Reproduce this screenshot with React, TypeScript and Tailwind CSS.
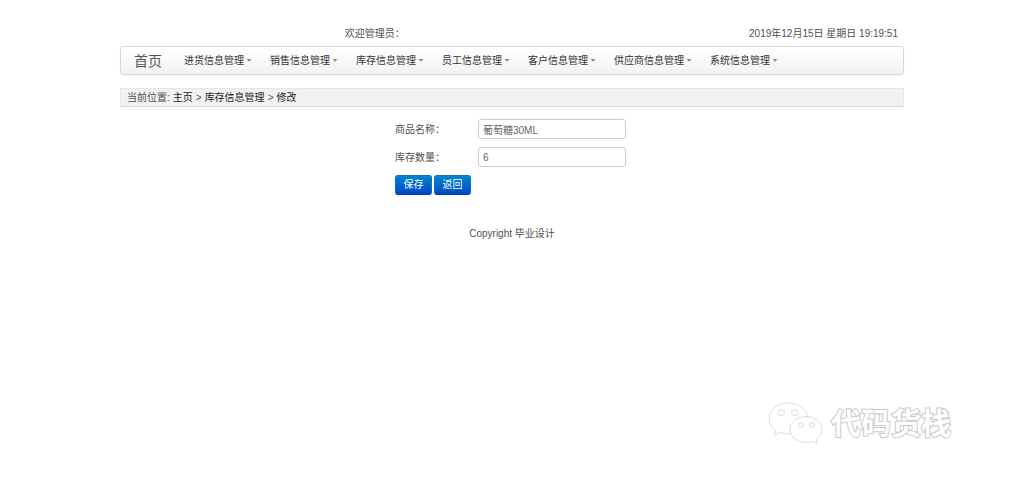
import React from 'react';

const menus = [
  '进货信息管理',
  '销售信息管理',
  '库存信息管理',
  '员工信息管理',
  '客户信息管理',
  '供应商信息管理',
  '系统信息管理',
];

function Header() {
  return (
    <header className="flex h-[46px] items-end pb-1 leading-4">
      <div className="w-[65%] text-center">欢迎管理员：</div>
      <div className="flex-1 pr-[6px] text-right whitespace-nowrap">2019年12月15日 星期日 19:19:51</div>
    </header>
  );
}

function Navbar() {
  return (
    <nav className="flex h-[29px] items-center rounded-[3px] border border-[#d8d8d8] bg-gradient-to-b from-white to-[#f2f2f2] pl-[13px] shadow-[0_1px_2px_rgba(0,0,0,0.06)]">
      <a href="#" className="mr-[22px] text-[14px] leading-5 text-[#555]">
        首页
      </a>
      <ul className="flex gap-[18px]">
        {menus.map((name) => (
          <li key={name}>
            <button type="button" className="flex items-center gap-[2px] whitespace-nowrap text-[#333]">
              {name}
              <svg className="h-[3px] w-[6px]" viewBox="0 0 6 3" fill="#888" aria-hidden="true">
                <path d="M0.500 0h5L3 2.800z" />
              </svg>
            </button>
          </li>
        ))}
      </ul>
    </nav>
  );
}

function Breadcrumb() {
  return (
    <div className="mt-[13px] flex h-[19px] items-center gap-[3px] border border-[#e6e6e6] border-b-[#d8d8d8] bg-[#f1f1f1] pl-[6px] leading-4">
      <span>当前位置:</span>
      <a href="#" className="text-[#222]">主页</a>
      <span>&gt;</span>
      <a href="#" className="text-[#222]">库存信息管理</a>
      <span>&gt;</span>
      <a href="#" className="text-[#222]">修改</a>
    </div>
  );
}

const labelClass = 'w-[83px] pt-[2px] leading-4';
const inputClass =
  'h-5 w-[148px] rounded-[3px] border border-[#ccc] bg-white px-1 text-[#666] outline-none';
const buttonClass =
  'h-5 w-[37px] rounded-[3px] border border-[#0a70c4] border-b-[#003fa8] bg-gradient-to-b from-[#0784cc] to-[#0346c6] leading-4 text-white';

function EditForm() {
  return (
    <form className="mx-auto mt-3 flex w-[234px] flex-col gap-2" onSubmit={(e) => e.preventDefault()}>
      <div className="flex items-center">
        <label htmlFor="name" className={labelClass}>商品名称：</label>
        <input id="name" type="text" defaultValue="葡萄糖30ML" className={inputClass} />
      </div>
      <div className="flex items-center">
        <label htmlFor="count" className={labelClass}>库存数量：</label>
        <input id="count" type="text" defaultValue="6" className={inputClass} />
      </div>
      <div className="flex gap-[2px]">
        <button type="submit" className={buttonClass}>保存</button>
        <button type="button" className={buttonClass}>返回</button>
      </div>
    </form>
  );
}

function Watermark() {
  return (
    <div className="pointer-events-none absolute right-[73px] bottom-[46px] flex items-center gap-2">
      <svg className="h-[42px] w-[55px]" viewBox="0 0 55 42" fill="white" stroke="#d2d2d2" strokeWidth="0.8" aria-hidden="true">
        <path d="M20.500 1C9.800 1 1 7.900 1 16.500c0 4.900 2.700 9.100 7 12l-1.500 4.200 6-2.200c2.400.9 5.100 1.400 8 1.400 10.700 0 19.500-6.900 19.500-15.400S31.200 1 20.500 1z" />
        <ellipse cx="13" cy="10.500" rx="3.500" ry="3" />
        <ellipse cx="27" cy="10.500" rx="3.500" ry="3" />
        <path d="M38 14.500c-8.900 0-16 5.900-16 13s7.100 13 16 13c2.300 0 4.400-.4 6.300-1.100l5 2.100-1.200-4.200c3.600-2.400 5.900-5.900 5.900-9.800 0-7.100-7.100-13-16-13z" />
        <rect x="30.500" y="21" width="5" height="4" rx="1" />
        <rect x="41.500" y="21" width="5" height="4" rx="1" />
      </svg>
      <span className="pt-[2px] text-[30px] leading-10 font-bold text-white [paint-order:stroke_fill] [-webkit-text-stroke:2px_#c8c8c8]">
        代码货栈
      </span>
    </div>
  );
}

export default function App() {
  return (
    <div className="relative min-h-screen bg-white font-['Liberation_Sans','Noto_Sans_CJK_SC',sans-serif] text-[10px] text-[#505050]">
      <div className="mx-auto w-full max-w-[784px]">
        <Header />
        <Navbar />
        <Breadcrumb />
        <EditForm />
        <footer className="mt-[31px] text-center leading-4">Copyright 毕业设计</footer>
      </div>
      <Watermark />
    </div>
  );
}
